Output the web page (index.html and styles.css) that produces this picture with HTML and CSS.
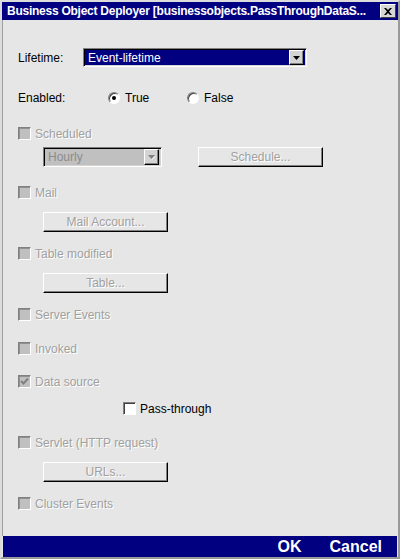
FILE: index.html
```html
<!DOCTYPE html>
<html lang="en">
<head>
  <meta charset="UTF-8">
  <title>Business Object Deployer</title>
  <link rel="stylesheet" href="styles.css">
</head>
<body>
  <div class="window">
    <div class="titlebar">
      <span class="title">Business Object Deployer [businessobjects.PassThroughDataS...</span>
      <span class="close-btn">
        <svg width="8" height="7" viewBox="0 0 8 7"><path d="M0 0h2l2 2 2-2h2L5 3.5 8 7H6L4 5 2 7H0l3-3.5z" fill="#000"/></svg>
      </span>
    </div>

    <div class="content">
      <div class="row row-lifetime">
        <span class="label lifetime-label">Lifetime:</span>
        <div class="combo combo-lifetime">
          <span class="combo-text">Event-lifetime</span>
          <span class="combo-arrow">
            <svg width="7" height="4" viewBox="0 0 7 4"><path d="M0 0h7L3.5 4z" fill="#000"/></svg>
          </span>
        </div>
      </div>

      <div class="row row-enabled">
        <span class="label enabled-label">Enabled:</span>
        <span class="radio-option"><span class="radio checked"></span>True</span>
        <span class="radio-option"><span class="radio"></span>False</span>
      </div>

      <div class="row check-row row-scheduled">
        <span class="cb"></span><span class="disabled-text">Scheduled</span>
      </div>

      <div class="row indent row-hourly">
        <div class="combo combo-hourly">
          <span class="combo-text">Hourly</span>
          <span class="combo-arrow">
            <svg width="7" height="5" viewBox="0 0 7 5"><path d="M0 0h7L3.5 4z" fill="#808080"/><path d="M4 4.5L7.5 1" stroke="#fff" stroke-width="1"/></svg>
          </span>
        </div>
        <span class="btn schedule-btn">Schedule...</span>
      </div>

      <div class="row check-row row-mail">
        <span class="cb"></span><span class="disabled-text">Mail</span>
      </div>

      <div class="row indent row-btn">
        <span class="btn">Mail Account...</span>
      </div>

      <div class="row check-row row-table">
        <span class="cb"></span><span class="disabled-text">Table modified</span>
      </div>

      <div class="row indent row-btn">
        <span class="btn">Table...</span>
      </div>

      <div class="row check-row row-server">
        <span class="cb"></span><span class="disabled-text">Server Events</span>
      </div>

      <div class="row check-row row-invoked">
        <span class="cb"></span><span class="disabled-text">Invoked</span>
      </div>

      <div class="row check-row row-datasource">
        <span class="cb">
          <svg width="9" height="9" viewBox="0 0 9 9"><path d="M1 4l2.5 2.5L8 1.5" stroke="#808080" stroke-width="2" fill="none"/></svg>
        </span><span class="disabled-text">Data source</span>
      </div>

      <div class="row check-row row-pass">
        <span class="cb cb-enabled"></span><span>Pass-through</span>
      </div>

      <div class="row check-row row-servlet">
        <span class="cb"></span><span class="disabled-text">Servlet (HTTP request)</span>
      </div>

      <div class="row indent row-btn">
        <span class="btn">URLs...</span>
      </div>

      <div class="row check-row row-cluster">
        <span class="cb"></span><span class="disabled-text">Cluster Events</span>
      </div>
    </div>

    <div class="footer">
      <span class="footer-btn">OK</span>
      <span class="footer-btn">Cancel</span>
    </div>
  </div>
</body>
</html>
```

FILE: styles.css
```css
body {
  margin: 0;
  background-color: #fff;
  font-family: "Liberation Sans", Arial, sans-serif;
  font-size: 12px;
  color: #000;
}

.window {
  width: 400px;
  height: 559px;
  box-sizing: border-box;
  display: flex;
  flex-direction: column;
  background-color: #e6e6e6;
  border: 2px solid #dcdcdc;
  border-right-color: #9a9a9a;
  border-bottom-color: #9a9a9a;
}

.titlebar {
  height: 18px;
  flex: none;
  display: flex;
  align-items: center;
  padding-left: 5px;
  background-color: #000080;
  color: #fff;
}

.title {
  flex: 1;
  overflow: hidden;
  font-weight: bold;
  font-size: 12px;
  letter-spacing: -0.25px;
  white-space: nowrap;
}

.close-btn {
  flex: none;
  margin-left: 2px;
  margin-right: 2px;
  width: 16px;
  height: 14px;
  box-sizing: border-box;
  display: flex;
  align-items: center;
  justify-content: center;
  background-color: #d6d6d6;
  border: 1px solid;
  border-color: #fff #404040 #404040 #fff;
}

.content {
  flex: 1;
  padding-left: 16px;
  box-shadow: inset 1px 0 0 #a0a0a0;
}

.row {
  display: flex;
  align-items: center;
  height: 13px;
}

.indent {
  padding-left: 25px;
  height: 20px;
}

.label {
  flex: none;
}

.lifetime-label {
  width: 65px;
}

.enabled-label {
  width: 90px;
}

.row-lifetime {
  margin-top: 28px;
  height: 19px;
}

.row-enabled {
  margin-top: 24px;
  height: 14px;
}

.row-scheduled { margin-top: 22px; }
.row-hourly { margin-top: 7px; }
.row-mail { margin-top: 19px; }
.row-btn { margin-top: 13px; }
.row-table { margin-top: 15px; }
.row-server { margin-top: 15px; }
.row-invoked { margin-top: 21px; }
.row-datasource { margin-top: 20px; }
.row-pass { margin-top: 14px; padding-left: 105px; }
.row-servlet { margin-top: 21px; }
.row-cluster { margin-top: 15px; }

/* combo boxes */
.combo {
  display: flex;
  align-items: center;
  box-sizing: border-box;
  border: 1px solid;
  border-color: #808080 #fff #fff #808080;
  box-shadow: inset 1px 1px 0 #000, inset -1px -1px 0 #d4d4d4;
  padding: 1px;
}

.combo-text {
  flex: 1;
  padding-left: 3px;
}

.combo-lifetime {
  width: 224px;
  height: 19px;
  background-color: #000080;
  color: #fff;
}

.combo-hourly {
  width: 119px;
  height: 20px;
  background-color: #c0c0c0;
  color: #8c8c8c;
}

.combo-arrow {
  width: 15px;
  height: 15px;
  box-sizing: border-box;
  display: flex;
  align-items: center;
  justify-content: center;
  margin-right: 1px;
  background-color: #d4d4d4;
  border: 1px solid;
  border-color: #fff #000 #000 #fff;
  box-shadow: inset -1px -1px 0 #808080;
}

.combo-hourly .combo-arrow {
  height: 16px;
}

/* radio buttons */
.radio-option {
  display: flex;
  align-items: center;
  width: 79px;
}

.radio {
  width: 12px;
  height: 12px;
  box-sizing: border-box;
  margin-right: 5px;
  border-radius: 50%;
  background-color: #fff;
  border: 1px solid;
  border-color: #808080 #fff #fff #808080;
  box-shadow: inset 1px 1px 0 #404040;
  display: flex;
  align-items: center;
  justify-content: center;
}

.radio.checked::after {
  content: "";
  width: 4px;
  height: 4px;
  border-radius: 50%;
  background-color: #000;
}

/* check boxes */
.cb {
  width: 13px;
  height: 13px;
  box-sizing: border-box;
  flex: none;
  margin-right: 4px;
  display: flex;
  align-items: center;
  justify-content: center;
  background-color: #c0c0c0;
  border: 1px solid;
  border-color: #808080 #fff #fff #808080;
  box-shadow: inset 1px 1px 0 #909090;
}

.cb-enabled {
  background-color: #fff;
  box-shadow: inset 1px 1px 0 #404040;
}

.disabled-text {
  color: #a0a0a0;
  text-shadow: 1px 1px 0 #fff;
}

/* push buttons */
.btn {
  width: 125px;
  height: 20px;
  box-sizing: border-box;
  display: flex;
  align-items: center;
  justify-content: center;
  background-color: #e6e6e6;
  border: 1px solid;
  border-color: #fff #000 #000 #fff;
  box-shadow: inset -1px -1px 0 #808080;
  color: #a0a0a0;
  text-shadow: 1px 1px 0 #fff;
}

.schedule-btn {
  margin-left: 36px;
}

.footer {
  height: 21px;
  flex: none;
  margin: 0 1px;
  display: flex;
  align-items: center;
  justify-content: flex-end;
  gap: 28px;
  padding-right: 15px;
  background-color: #000080;
  color: #fff;
  font-weight: bold;
  font-size: 16px;
}
```
